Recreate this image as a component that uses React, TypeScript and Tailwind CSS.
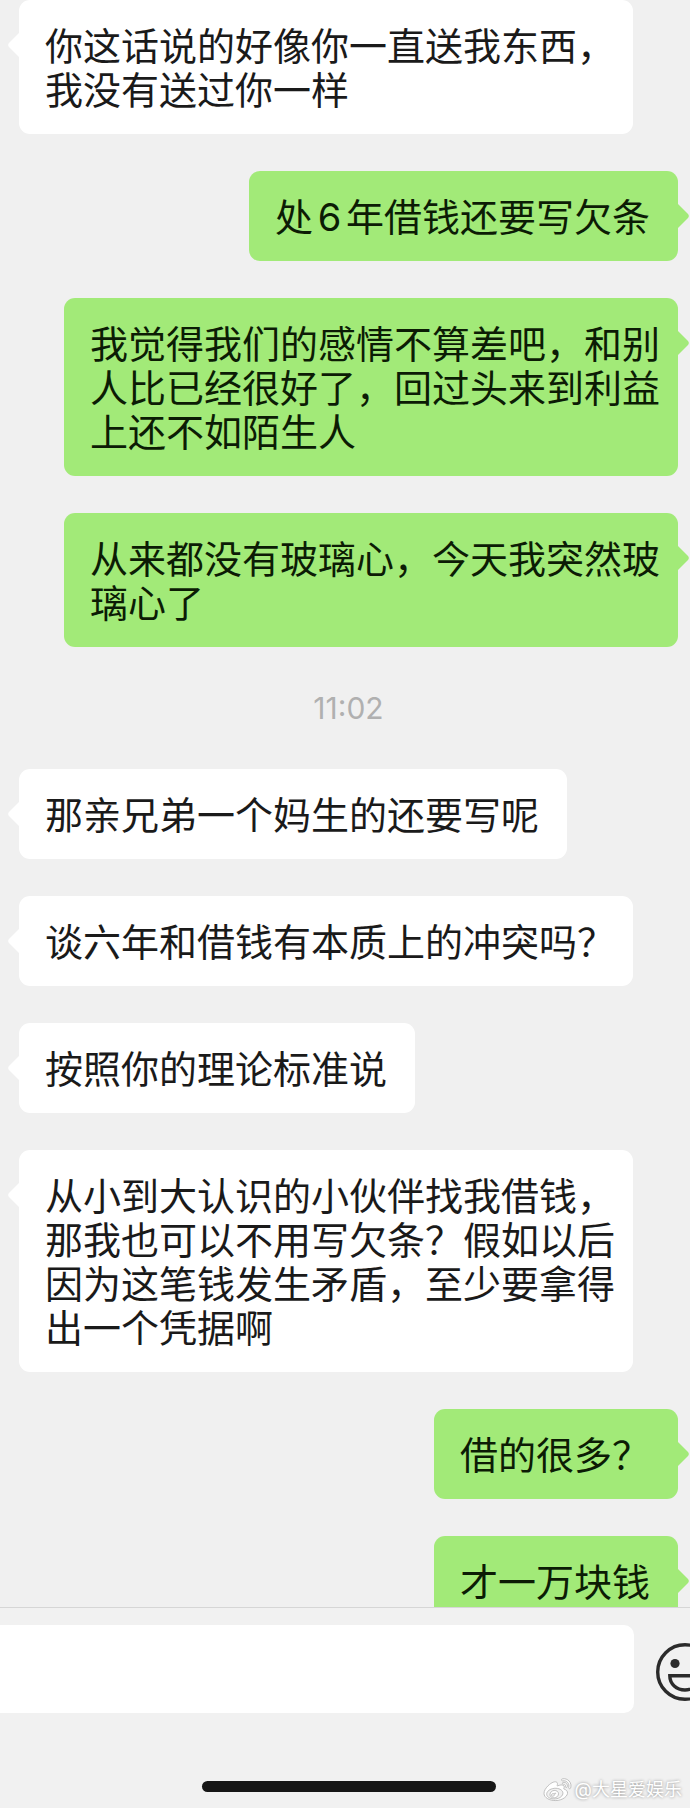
import clsx from "clsx"
import { FaWeibo } from "react-icons/fa"

type Message = {
  from: "me" | "them"
  text: string
  full?: boolean // text reaches the maximum bubble width
}

type Entry = Message | { time: string }

const entries: Entry[] = [
  { from: "them", text: "你这话说的好像你一直送我东西，我没有送过你一样", full: true },
  { from: "me", text: "处6年借钱还要写欠条" },
  { from: "me", text: "我觉得我们的感情不算差吧，和别人比已经很好了，回过头来到利益上还不如陌生人", full: true },
  { from: "me", text: "从来都没有玻璃心，今天我突然玻璃心了", full: true },
  { time: "11:02" },
  { from: "them", text: "那亲兄弟一个妈生的还要写呢" },
  { from: "them", text: "谈六年和借钱有本质上的冲突吗？", full: true },
  { from: "them", text: "按照你的理论标准说" },
  {
    from: "them",
    text: "从小到大认识的小伙伴找我借钱，那我也可以不用写欠条？假如以后因为这笔钱发生矛盾，至少要拿得出一个凭据啊",
    full: true,
  },
  { from: "me", text: "借的很多？" },
  { from: "me", text: "才一万块钱" },
]

const Tail = ({ mine }: { mine: boolean }) => (
  <svg
    viewBox="0 0 12 26"
    className={clsx("mt-8 h-[26px] w-3 shrink-0", mine ? "-ml-px text-[#a2ea78]" : "-mr-px rotate-180 text-white")}
    aria-hidden="true"
  >
    <path d="M0 0 L1 1 L11 11 Q12.6 13 11 15 L1 25 L0 26 Z" fill="currentColor" />
  </svg>
)

const Bubble = ({ from, text, full }: Message) => {
  const mine = from === "me"
  return (
    <li className={clsx("flex items-start", mine && "flex-row-reverse")}>
      <Tail mine={mine} />
      <p
        className={clsx(
          "max-w-[614px] rounded-[11px] pt-6 pb-[22px] pl-[26px] text-[38px] leading-[44px] [text-autospace:normal]",
          full ? "pr-[18px]" : "pr-[28px]",
          mine ? "bg-[#a2ea78] text-[#0c1c05]" : "bg-white text-[#1a1a1a]"
        )}
      >
        {text}
      </p>
    </li>
  )
}

const SmileIcon = () => (
  <svg viewBox="0 0 58 58" className="size-[58px]" fill="none" stroke="#2b2b2b" strokeWidth="3.4" aria-hidden="true">
    <circle cx="29" cy="29" r="27.3" />
    <circle cx="19" cy="20.5" r="4.6" fill="#2b2b2b" stroke="none" />
    <circle cx="39" cy="20.5" r="4.6" fill="#2b2b2b" stroke="none" />
    <path d="M13.8 32.8 H44.2 C44.2 41 37.5 47 29 47 C20.5 47 13.8 41 13.8 32.8 Z" />
  </svg>
)

export default function App() {
  return (
    <div
      lang="zh-CN"
      className="relative flex h-screen flex-col overflow-hidden bg-[#f0f0f0] font-['Inter','Noto_Sans_CJK_SC',sans-serif]"
    >
      {/* Conversation */}
      <main className="min-h-0 flex-1 overflow-hidden">
        <ul className="flex flex-col gap-[37px] pr-px pl-2">
          {entries.map((entry, i) =>
            "time" in entry ? (
              <li key={i} className="text-center text-[30px] leading-[48px] text-[#b0b0b0]">
                <time>{entry.time}</time>
              </li>
            ) : (
              <Bubble key={i} {...entry} />
            )
          )}
        </ul>
      </main>

      {/* Composer */}
      <footer className="border-t border-[#d6d6d6] bg-[#f1f1f1] pt-[17px] pb-4">
        <form className="flex items-center gap-[22px]">
          <input
            type="text"
            aria-label="消息"
            className="h-[88px] min-w-0 flex-1 rounded-r-[10px] bg-white px-6 text-[38px] outline-none"
          />
          <button type="button" aria-label="表情" className="-mr-6 shrink-0 pt-1.5">
            <SmileIcon />
          </button>
        </form>
        {/* Home indicator */}
        <div className="mt-[68px] pr-px pl-2">
          <div className="mx-auto h-[11px] w-[294px] rounded-full bg-[#161616]" />
        </div>
      </footer>

      {/* Watermark */}
      <div className="absolute right-2 bottom-1 flex items-center gap-1 text-[18px] leading-[28px] text-white [text-shadow:0_0_3px_#888]">
        <FaWeibo className="size-[27px] overflow-visible fill-white stroke-[#b5b5b5] stroke-[16]" aria-hidden="true" />
        <span>@大星爱娱乐</span>
      </div>
    </div>
  )
}
